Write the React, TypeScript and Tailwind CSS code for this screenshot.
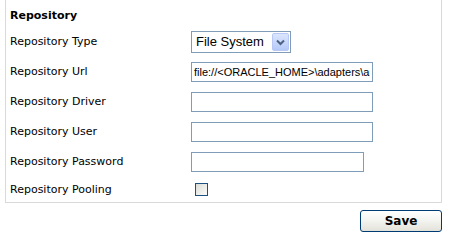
import { useState } from 'react'

const LABEL = 'w-[181px] shrink-0 text-[11px] leading-[14px] text-black'
const INPUT = 'h-[20px] border border-[#7f9db9] bg-white px-[2px] outline-none'

function Row({ label, h = 'h-[30px]', children }: { label: string; h?: string; children?: React.ReactNode }) {
  return (
    <div className={`flex items-center ${h}`}>
      <div className={LABEL}>{label}</div>
      {children}
    </div>
  )
}

export default function App() {
  const [pooling, setPooling] = useState(false)

  return (
    <div className="w-[462px] h-[242px] bg-white font-['DejaVu_Sans',Verdana,sans-serif]">
      <div className="ml-[5px] w-[437px] border-x border-b border-[#d9d9d9] pl-[4px]">
        {/* heading */}
        <div className="pt-[9px] pb-[4px] text-[11px] leading-[14px] font-bold text-black">Repository</div>

        <Row label="Repository Type">
          <div className="flex items-center h-[22px] w-[100px] border border-[#7f9db9] bg-white pl-[4px] pr-[1px]">
            <span className="flex-1 text-[13px] leading-[16px] font-['Liberation_Sans',Arial,sans-serif] text-black">File System</span>
            <span className="flex items-center justify-center w-[17px] h-[18px] rounded-[2px] border border-[#b7c8f6] bg-gradient-to-b from-[#dce6fd] to-[#b5c9f8]">
              <svg width="9" height="7" viewBox="0 0 9 7">
                <path d="M1 1.5 L4.5 5 L8 1.5" fill="none" stroke="#4d6185" strokeWidth="2" />
              </svg>
            </span>
          </div>
        </Row>

        <Row label="Repository Url">
          <input
            readOnly
            defaultValue={'file://<ORACLE_HOME>\\adapters\\application'}
            className={`${INPUT} w-[182px] text-[11px] font-['Liberation_Sans',Arial,sans-serif] text-black`}
          />
        </Row>

        <Row label="Repository Driver">
          <input className={`${INPUT} w-[182px]`} />
        </Row>

        <Row label="Repository User">
          <input className={`${INPUT} w-[182px]`} />
        </Row>

        <Row label="Repository Password">
          <input type="password" className={`${INPUT} w-[173px]`} />
        </Row>

        <Row label="Repository Pooling" h="h-[25px]">
          <button
            onClick={() => setPooling(!pooling)}
            className="ml-[4px] w-[13px] h-[13px] border border-[#1c5180] bg-gradient-to-br from-[#dcdcd7] to-[#fbfbf9]"
          >
            {pooling && <span className="block text-[9px] leading-[11px] text-[#21a121]">✓</span>}
          </button>
        </Row>
      </div>

      <div className="w-[442px] flex justify-end mt-[7px]">
        <button className="w-[82px] h-[22px] rounded-[3px] border border-[#003c74] bg-gradient-to-b from-[#ffffff] via-[#f3f3ef] to-[#e3e2da] text-[12px] font-bold text-black font-['DejaVu_Sans',Verdana,sans-serif]">
          Save
        </button>
      </div>
    </div>
  )
}
